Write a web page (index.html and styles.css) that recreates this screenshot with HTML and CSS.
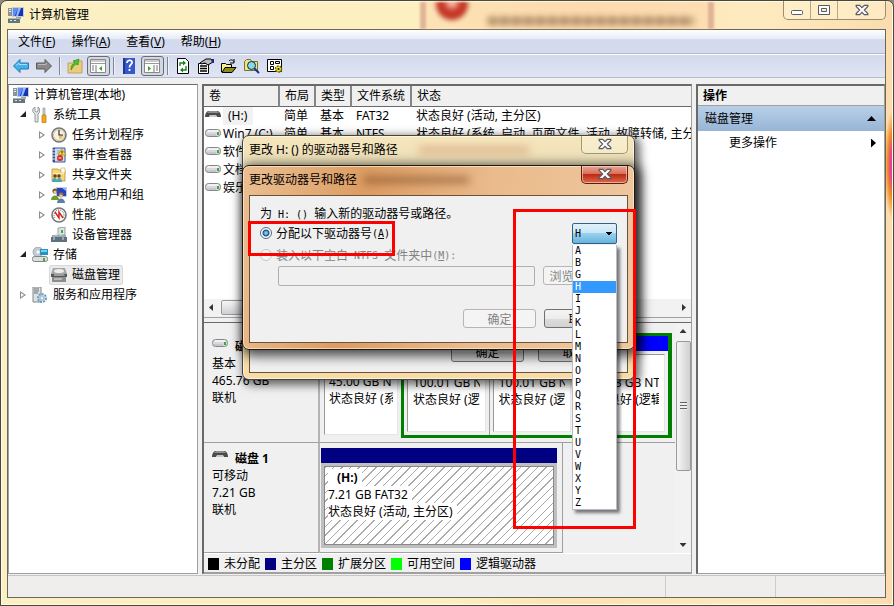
FILE: index.html
```
<!DOCTYPE html>
<html lang="zh-CN">

<head>
  <meta charset="UTF-8">
  <meta name="viewport" content="width=device-width, initial-scale=1.0">
  <title>计算机管理</title>
  <link rel="stylesheet" href="styles.css">
</head>

<body>
  <svg class="sprite" width="0" height="0">
    <symbol id="computer" viewBox="0 0 16 16">
      <path d="M0 1h5v8H0z" fill="#8a959b" />
      <path d="M1 2h2v1H1zM1 4h2v1H1z" fill="#e8eef0" />
      <path d="M4 0h12v10H4z" fill="#c4ccd8" />
      <path d="M5 1h10v8H5z" fill="#1633b4" />
      <path d="M5 1h5L7 9H5z" fill="#5f8df0" />
      <path d="M10 1h3l-3 8H8z" fill="#8fb6ff" />
      <path d="M8 10h5v2H8z" fill="#9ba3a8" />
      <path d="M0 11h12v5H0z" fill="#63777c" />
      <path d="M0 11h12v1H0z" fill="#a9b8bb" />
      <path d="M2 13h2v1H2zM6 13h2v1H6z" fill="#dfe8e8" />
    </symbol>
    <symbol id="tools" viewBox="0 0 16 16">
      <path d="M3 0v4l1 1h1l1-1V0c2 1 2 4 1 6L6 7v8H3V7L1 5C0 3 1 1 3 0z" fill="#e4e7e8" stroke="#7b8488" stroke-width=".8" />
      <path d="M11 1h2v7h-2z" fill="#cfd4d6" stroke="#777" stroke-width=".5" />
      <rect x="10" y="8" width="4" height="8" rx="1" fill="#f0ac1c" stroke="#b67200" stroke-width=".7" />
    </symbol>
    <symbol id="clock" viewBox="0 0 16 16">
      <circle cx="8" cy="8" r="7" fill="#f7f2e2" stroke="#777" stroke-width="1.6" />
      <circle cx="8" cy="8" r="5.5" fill="none" stroke="#cfc6a8" />
      <path d="M8 8h4a4 4 0 0 1-4 4z" fill="#efbd62" />
      <path d="M8 3v5h4" fill="none" stroke="#333" stroke-width="1.2" />
    </symbol>
    <symbol id="events" viewBox="0 0 16 16">
      <path d="M2 1h12v14H2z" fill="#cddcf0" stroke="#3b5797" />
      <path d="M2 1h2v14H2z" fill="#35518f" />
      <path d="M1 3h3M1 6h3M1 9h3M1 12h3" stroke="#dfe6f5" />
      <path d="M6 4h6M6 6h6M6 13h6" stroke="#8fa3c8" />
      <path d="M11 2l4 6H7z" fill="#ffd52e" stroke="#a77d00" stroke-width=".6" />
      <path d="M11 4v2M11 6.600v.8" stroke="#222" />
      <circle cx="9" cy="11" r="3" fill="#d62c22" />
      <path d="M7.500 11h3" stroke="#fff" />
    </symbol>
    <symbol id="shared" viewBox="0 0 16 16">
      <path d="M1 2h6l1 1h6v11H1z" fill="#f5d578" stroke="#bb9037" stroke-width=".8" />
      <path d="M10 1h4v5h-4z" fill="#fff" stroke="#bb9037" stroke-width=".5" />
      <path d="M2 6h11v1H2z" fill="#fdedb4" />
      <circle cx="4" cy="9" r="1.800" fill="#6b4626" />
      <circle cx="8" cy="9" r="1.800" fill="#6b4626" />
      <path d="M1 15c0-5 5-5 5-1 0-4 5-4 5 1z" fill="#45a9b5" />
    </symbol>
    <symbol id="users" viewBox="0 0 16 16">
      <path d="M5 0h11v10H5z" fill="#c6ced9" />
      <path d="M6 1h9v8H6z" fill="#2444c0" />
      <path d="M11 1h4v3z" fill="#8fb3ff" />
      <circle cx="4" cy="4" r="2.6" fill="#7a5632" />
      <circle cx="4" cy="5" r="1.6" fill="#f0c59a" />
      <path d="M0 13c0-6 8-6 8 0z" fill="#6f9c2c" />
      <circle cx="10" cy="8" r="2.4" fill="#a8743a" />
      <circle cx="10" cy="9" r="1.6" fill="#f0c59a" />
      <path d="M6 16c0-6 8-6 8 0z" fill="#5d7fa8" />
    </symbol>
    <symbol id="perf" viewBox="0 0 16 16">
      <circle cx="8" cy="8" r="7" fill="#fff" stroke="#777" stroke-width="1.6" />
      <path d="M4 11a5 5 0 1 1 8 0" fill="none" stroke="#555" stroke-dasharray="1 1" />
      <path d="M4 5l4 6V5l4 6" fill="none" stroke="#d0201c" stroke-width="1.4" />
    </symbol>
    <symbol id="devices" viewBox="0 0 16 16">
      <path d="M7 1l7-1v8H7z" fill="#dfe4e4" stroke="#858d90" stroke-width=".8" />
      <path d="M10 3h2v3h-2z" fill="#35b045" />
      <path d="M1 8h14v3H1z" fill="#9aabb5" />
      <path d="M0 10h16v5H0z" fill="#5f717c" />
      <path d="M5 9v-2h5v2M3 10v3M12 10v3" fill="none" stroke="#d5dde1" />
    </symbol>
    <symbol id="storage" viewBox="0 0 16 16">
      <circle cx="6" cy="5" r="5" fill="#c2cbd1" stroke="#828b90" stroke-width=".6" />
      <circle cx="6" cy="5" r="1.6" fill="#fff" />
      <path d="M8 2h8v6H8z" fill="#2394c4" />
      <path d="M9 3h6v2H9z" fill="#79d0ee" />
      <rect x=".5" y="9.500" width="15" height="5" rx="2" fill="#dcdfe0" stroke="#7f8689" />
      <path d="M11 11h2v3h-2z" fill="#35b52b" />
    </symbol>
    <symbol id="diskmgmt" viewBox="0 0 16 16">
      <path d="M2 1h12l2 6H0z" fill="#a5a5a5" />
      <ellipse cx="8" cy="4" rx="5" ry="2" fill="#ececec" />
      <path d="M0 7h16v3H0z" fill="#575757" />
      <path d="M1 10h14v5H1z" fill="#8c8c8c" />
      <path d="M3 8h10M3 12h8" stroke="#e4e4e4" />
      <path d="M12 8h2v1h-2z" fill="#3bd03b" />
    </symbol>
    <symbol id="services" viewBox="0 0 16 16">
      <path d="M1 0h8v15H1z" fill="#dce1e2" stroke="#7f898c" />
      <path d="M2 2h5M2 4h5M2 6h4" stroke="#647379" />
      <circle cx="10" cy="11" r="4" fill="none" stroke="#7098b8" stroke-width="2" stroke-dasharray="2 1" />
      <circle cx="10" cy="11" r="3" fill="#abc8de" />
      <circle cx="10" cy="11" r="1" fill="#fff" />
    </symbol>
    <symbol id="drive" viewBox="0 0 16 10">
      <rect x=".5" y="1.500" width="15" height="7" rx="3" fill="#d9d9dd" stroke="#85858a" />
      <path d="M3 2h10l1 2H2z" fill="#f1f1f3" />
      <path d="M2 7h9" stroke="#b4b4ba" />
      <path d="M12 4h2v3h-2z" fill="#3dab2c" />
    </symbol>
    <symbol id="removable" viewBox="0 0 16 10">
      <path d="M3 1h10c2 1 3 3 3 6h-4l-1-2H5L4 7H0c0-3 1-5 3-6z" fill="#4b4b4d" />
      <path d="M4 1h8l2 2H2z" fill="#8e8e91" />
      <path d="M5 5h6v2H5z" fill="#c8c8c8" />
    </symbol>
    <symbol id="cross" viewBox="0 0 12 10">
      <path d="M1 1h3l2 2 2-2h3v1L8 5l3 3v1H8L6 7 4 9H1V8l3-3-3-3z" fill="#fff" stroke="#555a66" />
    </symbol>
  </svg>

  <div class="window">
    <header class="titlebar">
      <div class="ghost">
        <i class="ghost-error"></i>
        <i class="ghost-text"></i>
      </div>
      <svg class="icon"><use href="#computer" /></svg>
      <h1>计算机管理</h1>
      <div class="controls">
        <button aria-label="最小化"><svg width="14" height="12"><rect x="1.5" y="6.5" width="11" height="4" rx="1" fill="#fff" stroke="#555a66" /></svg></button>
        <button aria-label="最大化"><svg width="14" height="12"><path d="M1.500 1.500h11v9h-11zM4.500 4.500v3h5v-3z" fill="#fff" fill-rule="evenodd" stroke="#555a66" /></svg></button>
        <button class="wide" aria-label="关闭"><svg width="14" height="12"><use href="#cross" /></svg></button>
      </div>
    </header>

    <div class="client">
      <nav class="menubar">
        <a href="#">文件(<u>F</u>)</a>
        <a href="#">操作(<u>A</u>)</a>
        <a href="#">查看(<u>V</u>)</a>
        <a href="#">帮助(<u>H</u>)</a>
      </nav>

      <div class="toolbar">
        <button aria-label="后退"><svg viewBox="0 0 16 16"><path d="M.5 8L7 1.500V5h8.500v6H7v3.500z" fill="#42b2ec" stroke="#2877ad" /><path d="M3 7.500L6 5v1.500h8" fill="none" stroke="#9ee0ff" /></svg></button>
        <button aria-label="前进"><svg viewBox="0 0 16 16"><path d="M15.500 8L9 1.500V5H.5v6H9v3.500z" fill="#898989" stroke="#5d5d5d" /><path d="M2 6.500h8V5" fill="none" stroke="#bbb" /></svg></button>
        <i class="sep"></i>
        <button aria-label="上一级"><svg viewBox="0 0 16 16"><path d="M1 5h5l1-2h8v12H1z" fill="#eccb7a" stroke="#b99848" stroke-width=".8" /><path d="M4 12c0-4 1-6 4-7L6 3l6-2-1 6-2-1c-2 1-3 3-5 6z" fill="#4cc431" stroke="#27851a" stroke-width=".6" /></svg></button>
        <button class="pressed" aria-label="显示控制台树"><svg viewBox="0 0 16 14"><path d="M.5.5h15v13H.5z" fill="#fff" stroke="#888" /><path d="M1 2h14M1 4.500h14" stroke="#999" /><path d="M2 7h2M2 9h2M2 11h2M6 6v7" stroke="#777" /><path d="M12 7v5L9 9.500z" fill="#2fa322" /></svg></button>
        <i class="sep"></i>
        <button aria-label="帮助"><svg viewBox="0 0 16 16"><path d="M2 0h12v16H2z" fill="#3559c8" /><path d="M2 0h2v16H2z" fill="#21398d" /><path d="M6 5c0-4 6-3 5 0-.5 1.500-2.500 2-2.500 4.500M8.500 11v2" fill="none" stroke="#fff" stroke-width="1.800" /></svg></button>
        <button class="pressed" aria-label="显示操作窗格"><svg viewBox="0 0 16 14"><path d="M.5.5h15v13H.5z" fill="#fff" stroke="#888" /><path d="M1 2h14M1 4.500h14" stroke="#999" /><path d="M12 7h2M12 9h2M12 11h2M10 6v7" stroke="#777" /><path d="M4 7v5l3-2.500z" fill="#2fa322" /></svg></button>
        <i class="sep"></i>
        <button aria-label="刷新"><svg viewBox="0 0 16 16"><path d="M2.500.5h8l3 3v12h-11z" fill="#fff" stroke="#000" /><path d="M5 8V5h5M11 8v4H6" fill="none" stroke="#16821b" stroke-width="1.400" /><path d="M8 2.500v5L11 5zM8 9.500v5L5 12z" fill="#16821b" /></svg></button>
        <button aria-label="属性"><svg viewBox="0 0 16 16"><path d="M.5 5.500h10v10H.5z" fill="#fff" stroke="#000" /><path d="M2 8h7M2 10.500h7M2 13h7" stroke="#000" stroke-width="1.400" /><path d="M2 5l6-4h5l2 3-5 3-3-2-4 1z" fill="#bbb" stroke="#000" /><path d="M13 1h3v4h-2z" fill="#24247c" /></svg></button>
        <button aria-label="打开"><svg viewBox="0 0 16 16"><path d="M.5 14V5.500h4l1 1h5V9" fill="#f8f28a" stroke="#000" /><path d="M1 14.500L4 9.500h11l-4 5z" fill="#8d8b1c" stroke="#000" /><path d="M8 3c2-2 4-1 5 1M13 1v4h-4" fill="none" stroke="#000" /></svg></button>
        <button aria-label="查找"><svg viewBox="0 0 16 16"><path d="M.5 3.500l2-2h4l1 2h6v9H.5z" fill="#ebe58a" stroke="#77752e" /><circle cx="7.500" cy="7.500" r="4" fill="#7fdcec" stroke="#222" /><path d="M10.500 10.500L15 15" stroke="#1a2f9c" stroke-width="2" /></svg></button>
        <button aria-label="设置"><svg viewBox="0 0 16 16"><path d="M.5 1.500h14v12H.5z" fill="#fff" stroke="#000" /><path d="M3.500 3.500h3v3h-3zM3.500 8.500h3v3h-3zM8.500 3.500h4v2h-4z" fill="none" stroke="#000" /><circle cx="11.500" cy="11" r="3" fill="#f4ea2a" stroke="#6e6900" stroke-width="1.500" stroke-dasharray="2 1" /><circle cx="11.500" cy="11" r="1" fill="#000" /></svg></button>
      </div>

      <main class="panes">
        <section class="pane tree">
          <div class="row"><span class="item"><svg class="icon"><use href="#computer" /></svg>计算机管理(本地)</span></div>
          <ul>
            <li>
              <div class="row"><i class="arrow open"></i><span class="item"><svg class="icon"><use href="#tools" /></svg>系统工具</span></div>
              <ul>
                <li class="row"><i class="arrow"></i><span class="item"><svg class="icon"><use href="#clock" /></svg>任务计划程序</span></li>
                <li class="row"><i class="arrow"></i><span class="item"><svg class="icon"><use href="#events" /></svg>事件查看器</span></li>
                <li class="row"><i class="arrow"></i><span class="item"><svg class="icon"><use href="#shared" /></svg>共享文件夹</span></li>
                <li class="row"><i class="arrow"></i><span class="item"><svg class="icon"><use href="#users" /></svg>本地用户和组</span></li>
                <li class="row"><i class="arrow"></i><span class="item"><svg class="icon"><use href="#perf" /></svg>性能</span></li>
                <li class="row"><i class="arrow none"></i><span class="item"><svg class="icon"><use href="#devices" /></svg>设备管理器</span></li>
              </ul>
            </li>
            <li>
              <div class="row"><i class="arrow open"></i><span class="item"><svg class="icon"><use href="#storage" /></svg>存储</span></div>
              <ul>
                <li class="row"><i class="arrow none"></i><span class="item selected"><svg class="icon"><use href="#diskmgmt" /></svg>磁盘管理</span></li>
              </ul>
            </li>
            <li>
              <div class="row"><i class="arrow"></i><span class="item"><svg class="icon"><use href="#services" /></svg>服务和应用程序</span></div>
            </li>
          </ul>
        </section>

        <section class="pane center">
          <div class="volumes">
            <table>
              <colgroup>
                <col class="col-name"><col class="col-small"><col class="col-small"><col class="col-fs"><col>
              </colgroup>
              <thead>
                <tr><th>卷</th><th>布局</th><th>类型</th><th>文件系统</th><th>状态</th></tr>
              </thead>
              <tbody>
                <tr><td class="name"><svg><use href="#removable" /></svg><span class="current">(H:)</span></td><td>简单</td><td>基本</td><td>FAT32</td><td>状态良好 (活动, 主分区)</td></tr>
                <tr><td class="name"><svg><use href="#drive" /></svg>Win7 (C:)</td><td>简单</td><td>基本</td><td>NTFS</td><td>状态良好 (系统, 启动, 页面文件, 活动, 故障转储, 主分区)</td></tr>
                <tr><td class="name"><svg><use href="#drive" /></svg>软件 (D:)</td><td>简单</td><td>基本</td><td>NTFS</td><td>状态良好 (逻辑驱动器)</td></tr>
                <tr><td class="name"><svg><use href="#drive" /></svg>文档 (E:)</td><td>简单</td><td>基本</td><td>NTFS</td><td>状态良好 (逻辑驱动器)</td></tr>
                <tr><td class="name"><svg><use href="#drive" /></svg>娱乐 (F:)</td><td>简单</td><td>基本</td><td>NTFS</td><td>状态良好 (逻辑驱动器)</td></tr>
              </tbody>
            </table>
          </div>
          <div class="hscroll"><i class="left"></i><b></b><i class="right"></i></div>

          <div class="diskview">
            <div class="disks">
              <div class="disk">
                <div class="disk-info">
                  <h2><svg><use href="#drive" /></svg>磁盘 0</h2>
                  <p>基本</p>
                  <p>465.76 GB</p>
                  <p>联机</p>
                </div>
                <div class="graph">
                  <div class="part primary">
                    <div class="body"><b>Win7 (C:)</b><span>45.00 GB NTFS</span><span>状态良好 (系统, 启动)</span></div>
                  </div>
                  <div class="extended">
                    <div class="part logical">
                      <div class="body"><b>软件 (D:)</b><span>100.01 GB NTFS</span><span>状态良好 (逻辑驱动器)</span></div>
                    </div>
                    <div class="part logical">
                      <div class="body"><b>文档 (E:)</b><span>100.01 GB NTFS</span><span>状态良好 (逻辑驱动器)</span></div>
                    </div>
                    <div class="part logical">
                      <div class="body"><b>娱乐 (F:)</b><span>220.73 GB NTFS</span><span>状态良好 (逻辑驱动器)</span></div>
                    </div>
                  </div>
                </div>
              </div>
              <div class="disk">
                <div class="disk-info">
                  <h2><svg><use href="#removable" /></svg>磁盘 1</h2>
                  <p>可移动</p>
                  <p>7.21 GB</p>
                  <p>联机</p>
                </div>
                <div class="graph single">
                  <div class="part primary active">
                    <div class="body"><b>(H:)</b><span>7.21 GB FAT32</span><span>状态良好 (活动, 主分区)</span></div>
                  </div>
                </div>
              </div>
            </div>
            <div class="vscroll"><i class="up"></i><b></b><i class="down"></i></div>
          </div>

          <div class="legend">
            <span class="unallocated">未分配</span>
            <span class="main-part">主分区</span>
            <span class="ext-part">扩展分区</span>
            <span class="free">可用空间</span>
            <span class="logical-drive">逻辑驱动器</span>
          </div>
        </section>

        <aside class="pane actions">
          <h2>操作</h2>
          <h3>磁盘管理<i class="up"></i></h3>
          <a href="#">更多操作<i class="right"></i></a>
        </aside>
      </main>

      <footer class="statusbar"><span></span><span></span><span></span></footer>
    </div>
  </div>

  <div class="dialog back">
    <div class="caption">
      <h2>更改 H: () 的驱动器号和路径</h2>
      <button class="close" aria-label="关闭"><svg width="14" height="12"><use href="#cross" /></svg></button>
    </div>
    <div class="content">
      <div class="buttons">
        <button>确定</button>
        <button>取消</button>
      </div>
    </div>
  </div>

  <div class="dialog front">
    <div class="caption">
      <h2>更改驱动器号和路径</h2>
      <button class="close" aria-label="关闭"><svg width="14" height="12"><use href="#cross" /></svg></button>
    </div>
    <form class="content">
      <p>为<span class="en"> H: () </span>输入新的驱动器号或路径。</p>
      <div class="assign">
        <label><input type="radio" name="path" checked>分配以下驱动器号<span class="en">(<u>A</u>)</span></label>
        <div class="combo">
          <select aria-label="驱动器号">
            <option>A</option>
            <option>B</option>
            <option>G</option>
            <option selected>H</option>
            <option>I</option>
            <option>J</option>
          </select>
          <ul class="letters">
            <li>A</li><li>B</li><li>G</li><li class="on">H</li><li>I</li><li>J</li><li>K</li><li>L</li>
            <li>M</li><li>N</li><li>O</li><li>P</li><li>Q</li><li>R</li><li>S</li><li>T</li>
            <li>U</li><li>V</li><li>W</li><li>X</li><li>Y</li><li>Z</li>
          </ul>
        </div>
      </div>
      <label class="off"><input type="radio" name="path" disabled>装入以下空白<span class="en"> NTFS </span>文件夹中<span class="en">(<u>M</u>):</span></label>
      <div class="mount">
        <input type="text" aria-label="文件夹" disabled>
        <button type="button" disabled>浏览<span class="en">(B)...</span></button>
      </div>
      <div class="buttons">
        <button type="button" disabled>确定</button>
        <button type="button">取消</button>
      </div>
    </form>
  </div>

  <i class="mark mark-radio"></i>
  <i class="mark mark-letters"></i>
</body>

</html>
```
FILE: styles.css
```
:root {
  --face: #f0f0f0;
  --line: #a0a0a0;
  --edge: #696969;
  --navy: #000080;
  --green: #008000;
  --blue: #0000ff;
}

* {
  box-sizing: border-box;
}

body {
  margin: 0;
  position: relative;
  font: 12px/18px "Noto Sans", "Noto Sans CJK SC", sans-serif;
  color: #000;
  background: #8d8a80;
}

h1, h2, h3, p, ul {
  margin: 0;
  padding: 0;
  font-size: 12px;
  font-weight: normal;
  list-style: none;
}

button {
  font: inherit;
  color: inherit;
}

a {
  color: inherit;
  text-decoration: none;
}

.sprite {
  position: absolute;
}

.icon {
  width: 16px;
  height: 16px;
  flex: none;
}

.window {
  min-height: 100vh;
  display: flex;
  flex-direction: column;
  padding: 0 7px 7px 6px;
  border: 1px solid #4a463a;
  border-radius: 7px 7px 0 0;
  background:
    radial-gradient(ellipse 9px 55px at 100% 164px, #ea3f97 30%, #f08c22 60%, transparent),
    linear-gradient(90deg, #fbf0c4, #fdf0c0 50%, #fce2b4 65%, #fdebbf 85%, #fbdcae);
  box-shadow: inset 0 0 0 1px #fffbe6;
}

.titlebar {
  position: relative;
  display: flex;
  align-items: center;
  gap: 5px;
  height: 28px;
  padding-left: 1px;
}

.titlebar .icon {
  position: relative;
}

.titlebar h1 {
  flex: 1;
}

.ghost {
  position: absolute;
  top: 1px;
  bottom: 0;
  left: 47%;
  width: 294px;
  overflow: hidden;
  background: rgba(252, 212, 168, .5);
  border: solid rgba(206, 152, 132, .6);
  border-width: 0 6px;
  filter: blur(1px);
}

.ghost-error {
  position: absolute;
  left: 10px;
  top: -14px;
  width: 32px;
  height: 32px;
  border-radius: 50%;
  background: radial-gradient(circle at 50% 45%, #f4b4a4 0 4px, #cf3a2a 8px, #a83020);
  filter: blur(2px);
}

.ghost-text {
  position: absolute;
  left: 62px;
  top: 15px;
  width: 206px;
  height: 8px;
  background: repeating-linear-gradient(90deg, rgba(110, 70, 40, .6) 0 8px, rgba(110, 70, 40, .2) 10px 12px);
  filter: blur(3px);
}

.controls {
  position: relative;
  align-self: flex-start;
  display: flex;
  height: 19px;
  border: 1px solid #9a8c72;
  border-top: 0;
  border-radius: 0 0 5px 5px;
  background: rgba(255, 246, 214, .5);
}

.controls button {
  width: 27px;
  padding: 0;
  border: 0;
  border-right: 1px solid #b5a78c;
  background: none;
  line-height: 10px;
}

.controls .wide {
  width: 47px;
  border-right: 0;
}

.client {
  flex: 1;
  display: flex;
  flex-direction: column;
  border: 1px solid #6b6656;
  background: var(--face);
}

.menubar {
  display: flex;
  gap: 16px;
  height: 24px;
  padding: 3px 10px;
  border-bottom: 1px solid #b2b8cc;
  background: linear-gradient(#fff, #e6ebf6 38%, #d3daed 42%, #d5dbee);
}

.toolbar {
  display: flex;
  align-items: center;
  height: 24px;
  padding-left: 2px;
  border-top: 1px solid #fff;
  border-bottom: 1px solid #b6bccc;
  background: linear-gradient(#d3daed, #dfe5f3);
}

.toolbar button {
  width: 23px;
  height: 22px;
  padding: 3px;
  border: 0;
  background: none;
}

.toolbar svg {
  display: block;
  width: 16px;
  height: 16px;
}

.toolbar .pressed {
  height: 20px;
  border: 1px solid #686c76;
  border-radius: 3px;
  padding: 1px 2px;
  background: #d2d7e2;
}

.toolbar .sep {
  width: 2px;
  height: 18px;
  margin: 0 3px;
  background: linear-gradient(90deg, #7f8694 50%, #eef1f8 50%);
}

.panes {
  flex: 1;
  display: flex;
  gap: 4px;
  padding-top: 6px;
}

.pane {
  border: 1px solid var(--line);
  border-top: 2px solid var(--edge);
  background: #fff;
}

.tree {
  width: 190px;
  border-top-width: 1px;
}

.tree .row {
  display: flex;
  align-items: center;
  height: 20px;
}

.tree > .row {
  padding-left: 2px;
}

.tree > ul {
  padding-left: 7px;
}

.tree ul ul {
  padding-left: 19px;
}

.item {
  display: flex;
  align-items: center;
  gap: 5px;
  height: 20px;
  padding: 0 3px 0 2px;
}

.item.selected {
  border-radius: 3px;
  background: #ebebeb;
  box-shadow: inset 0 0 0 1px #d9d9d9;
}

.arrow {
  width: 14px;
  height: 8px;
}

.arrow::before {
  content: "";
  display: block;
  width: 6px;
  height: 8px;
  margin-left: 4px;
  background: #8d8d8d;
  clip-path: polygon(0 0, 100% 50%, 0 100%, 0 0, 1px 2px, 1px 6px, 4px 4px, 1px 2px);
}

.arrow.open::before {
  height: 6px;
  background: #222;
  clip-path: polygon(100% 0, 100% 100%, 0 100%);
}

.arrow.none::before {
  background: none;
}

.center {
  flex: 1;
  min-width: 0;
  display: flex;
  flex-direction: column;
  border-left: 2px solid var(--edge);
  background: var(--face);
}

.volumes {
  flex: 1;
  overflow: hidden;
  background: #fff;
}

.volumes table {
  width: 100%;
  table-layout: fixed;
  border-collapse: collapse;
  white-space: nowrap;
}

.col-name {
  width: 75px;
}

.col-small {
  width: 36px;
}

.col-fs {
  width: 60px;
}

.volumes th {
  height: 20px;
  padding: 0 0 0 5px;
  text-align: left;
  font-weight: normal;
  background: var(--face);
  border-right: 2px solid #858585;
  border-bottom: 1px solid var(--edge);
}

.volumes th:last-child {
  border-right: 0;
}

.volumes td {
  height: 18px;
  padding: 0 0 0 5px;
  overflow: hidden;
}

.volumes .name {
  padding-left: 1px;
}

.name svg {
  width: 16px;
  height: 10px;
  margin-right: 2px;
}

.name .current {
  display: inline-block;
  padding: 0 6px 0 5px;
  background: #f2f2f2;
}

.hscroll,
.vscroll {
  display: flex;
  align-items: center;
  background: #f2f2f2;
}

.hscroll {
  height: 17px;
  padding: 0 5px;
  gap: 8px;
}

.hscroll b {
  width: 270px;
  height: 15px;
  border: 1px solid #999;
  border-radius: 2px;
  background: linear-gradient(#f6f6f6, #d0d0d4);
}

.hscroll .right {
  margin-left: auto;
}

i.left, i.right, i.up, i.down {
  background: #333;
}

i.left, i.right {
  width: 4px;
  height: 7px;
}

i.up, i.down {
  width: 7px;
  height: 4px;
}

i.left {
  clip-path: polygon(100% 0, 100% 100%, 0 50%);
}

i.right {
  clip-path: polygon(0 0, 100% 50%, 0 100%);
}

i.up {
  clip-path: polygon(50% 0, 100% 100%, 0 100%);
}

i.down {
  clip-path: polygon(0 0, 100% 0, 50% 100%);
}

.diskview {
  display: flex;
  height: 236px;
  margin-top: 1px;
  padding-top: 5px;
  border-top: 1px solid var(--line);
  background: linear-gradient(var(--edge), var(--edge)) 0 4px / 100% 1px no-repeat;
}

.disks {
  flex: 1;
  min-width: 0;
  padding-top: 5px;
  line-height: 17px;
}

.disk {
  display: flex;
  height: 115px;
}

.disk + .disk {
  height: 110px;
}

.disk-info {
  width: 116px;
  padding: 10px 8px 0;
  border-right: 2px solid #b4b4b4;
  border-bottom: 1px solid var(--line);
}

.disk + .disk .disk-info {
  padding-top: 7px;
}

.disk-info h2 {
  display: flex;
  gap: 7px;
  font-weight: bold;
}

.disk-info h2 svg {
  width: 16px;
  height: 10px;
}

.graph {
  flex: 1;
  min-width: 0;
  display: flex;
  align-items: stretch;
  padding: 5px 3px 4px 1px;
  border-bottom: 1px solid var(--line);
}

.graph.single {
  flex: none;
  width: 243px;
  padding: 5px 5px 4px 1px;
  border-right: 1px solid var(--line);
}

.part {
  flex: 1;
  min-width: 0;
  display: flex;
  flex-direction: column;
  background: var(--face);
}

.part::before {
  content: "";
  height: 15px;
  background: var(--navy);
}

.part.logical::before {
  background: var(--blue);
}

.part .body {
  flex: 1;
  margin: 3px;
  padding: 4px 4px 0;
  border: 1px solid #999;
  border-color: #999 #e6e6e6 #e6e6e6 #999;
  background: #fff;
  overflow: hidden;
  white-space: nowrap;
}

.part.logical .body {
  padding: 2px 5px 0;
}

.body b,
.body span {
  display: block;
  width: fit-content;
  max-width: 100%;
  overflow: hidden;
  background: #fff;
}

.graph > .primary {
  flex: 0 0 80px;
}

.graph.single > .primary {
  flex: 1;
}

.part.active {
  background: #bfbfbf;
}

.active .body {
  padding: 2px 3px;
  border-color: #888;
  background: repeating-linear-gradient(135deg, #aaa 0 1px, #fff 1px 6px);
}

.active .body b,
.active .body span {
  padding-right: 4px;
}

.active .body b {
  padding-left: 9px;
}

.extended {
  flex: 1;
  min-width: 0;
  display: flex;
  border: 3px solid var(--green);
  border-right-width: 4px;
}

.extended .part:last-child {
  flex-grow: 1.1;
}

.extended .part + .part {
  border-left: 1px solid var(--line);
}

.vscroll {
  width: 16px;
  padding: 6px 0;
  flex-direction: column;
}

.vscroll b {
  display: grid;
  place-items: center;
  width: 15px;
  height: 130px;
  margin-top: 8px;
  border: 1px solid #999;
  border-radius: 2px;
  background: linear-gradient(90deg, #f6f6f6, #d0d0d4);
}

.vscroll b::before {
  content: "";
  width: 7px;
  height: 8px;
  background: repeating-linear-gradient(#666 0 1px, #eee 1px 3px);
}

.vscroll .down {
  margin-top: auto;
}

.legend {
  display: flex;
  gap: 5px;
  height: 20px;
  padding: 1px 0 0 4px;
  border-top: 1px solid #fff;
  border-bottom: 1px solid var(--line);
}

.legend span {
  display: flex;
  align-items: center;
  gap: 5px;
  white-space: nowrap;
}

.legend span::before {
  content: "";
  width: 11px;
  height: 12px;
  background: #000;
}

.legend .main-part::before {
  background: var(--navy);
}

.legend .ext-part::before {
  background: var(--green);
}

.legend .free::before {
  background: #00ff00;
}

.legend .logical-drive::before {
  background: var(--blue);
}

.actions {
  width: 189px;
  border-left: 2px solid var(--edge);
}

.actions h2 {
  height: 20px;
  padding: 1px 0 0 5px;
  font-weight: bold;
  background: var(--face);
  border-bottom: 1px solid var(--line);
}

.actions h3,
.actions a {
  display: flex;
  align-items: center;
  justify-content: space-between;
  height: 24px;
  padding: 0 8px 0 31px;
}

.actions h3 {
  height: 25px;
  padding-left: 7px;
  background: linear-gradient(#b8cfe8, #98b5d6);
}

.actions i {
  background: #000;
}

.actions i.up {
  width: 9px;
  height: 5px;
}

.actions i.right {
  width: 5px;
  height: 9px;
}

.statusbar {
  display: flex;
  height: 22px;
  margin-top: 1px;
  border-top: 1px solid #c8c4c4;
  background: #f0eded;
}

.statusbar span {
  flex: 1;
}

.statusbar span + span {
  flex: 0 0 110px;
  border-left: 1px solid #ccc;
}

/* dialogs float over the main window */
.dialog {
  position: absolute;
  left: 242px;
  top: 135px;
  width: 393px;
  padding: 0 6px 6px;
  border: 1px solid #4a4338;
  border-radius: 7px;
  background: linear-gradient(#f6e6bc, #ecdfb8 28px, #f7dca8 60px, #f7dca8);
  box-shadow: inset 0 0 0 1px rgba(255, 255, 255, .6), 3px 3px 10px 2px rgba(0, 0, 0, .6);
}

.dialog.front {
  top: 165px;
  border-color: #1f1a14;
  background: linear-gradient(100deg, #eabf92, #dc9c62 30%, #eabb8c 60%, #efc8a0);
  box-shadow: inset 0 0 0 1px rgba(255, 235, 210, .7), 3px 3px 12px 3px rgba(0, 0, 0, .7);
}

.caption {
  position: relative;
  display: flex;
  justify-content: space-between;
  height: 29px;
}

.caption h2 {
  padding-top: 5px;
}

.caption::after {
  content: "";
  position: absolute;
  left: 170px;
  top: 11px;
  width: 110px;
  height: 6px;
  background: rgba(200, 120, 80, .5);
  filter: blur(4px);
}

.front .caption::after {
  left: 115px;
  width: 105px;
  background: rgba(90, 40, 10, .5);
}

.close {
  width: 47px;
  height: 18px;
  padding: 0;
  line-height: 10px;
  border: 1px solid #a39878;
  border-top: 0;
  border-radius: 0 0 5px 5px;
  background: rgba(255, 250, 225, .4);
}

.front .close {
  border-color: #5e1d12;
  background: linear-gradient(#e9a596, #d9705c 45%, #bb2b14 50%, #e0684a);
  box-shadow: inset 0 0 0 1px rgba(255, 220, 200, .6);
}

.dialog .content {
  height: 208px;
  border: 1px solid #6e5238;
  background: var(--face);
}

.front .content {
  height: 148px;
  padding: 8px 10px;
  font-family: "Noto Sans CJK SC", sans-serif;
}

.en {
  font: 10px "DejaVu Sans Mono", monospace;
  white-space: pre;
}

.front label {
  display: flex;
  align-items: center;
  height: 22px;
}

.front label input {
  width: 12px;
  height: 12px;
  margin: 0 4px 0 0;
  appearance: none;
  border: 1px solid #8a8f94;
  border-radius: 50%;
  background: #f6f6f6;
}

.front label input:checked {
  border-color: #55697a;
  background: radial-gradient(circle, #6fd0f5 0 1px, #1b4f86 3px, #fff 4px);
}

.front label.off {
  color: #838383;
}

.front label.off input {
  border-color: #c4c4c4;
}

.assign {
  display: flex;
  justify-content: space-between;
}

.combo {
  position: relative;
  margin-top: 1px;
}

.combo select {
  display: block;
  width: 45px;
  height: 21px;
  padding: 0 2px;
  appearance: none;
  border: 1px solid #2c628b;
  border-radius: 2px;
  font: 10px "DejaVu Sans Mono", monospace;
  background:
    linear-gradient(to top right, transparent 50%, #000 50%) 32px 8px / 4px 4px no-repeat,
    linear-gradient(to top left, transparent 50%, #000 50%) 36px 8px / 4px 4px no-repeat,
    linear-gradient(#e2f2fb, #c4e5f6 50%, #98d1ef 50%, #68b3db);
}

.letters {
  position: absolute;
  z-index: 1;
  left: 0;
  top: 22px;
  width: 45px;
  border: 1px solid #b9b9cc;
  border-top: 0;
  background: #fff;
  line-height: 12px;
  box-shadow: 3px 3px 3px rgba(0, 0, 0, .5);
}

.letters li {
  padding-left: 2px;
  font: 10px/12px "DejaVu Sans Mono", monospace;
}

.letters .on {
  color: #fff;
  background: #3399ff;
}

.mount {
  display: flex;
  gap: 8px;
  padding-left: 18px;
}

.mount input {
  width: 257px;
  height: 20px;
  border: 1px solid #b0b0b0;
  border-radius: 2px;
  background: #f0f0f0;
}

.dialog .mount button,
.buttons button {
  width: 73px;
  height: 19px;
  padding: 0;
  line-height: 16px;
  border: 1px solid #707070;
  border-radius: 3px;
  background: linear-gradient(#f4f4f4, #ececec 50%, #dddddd 50%, #d2d2d2);
}

.dialog button:disabled {
  color: #838383;
  border-color: #b5b5b5;
  background: #f4f4f4;
}

.buttons {
  display: flex;
  justify-content: flex-end;
  gap: 8px;
}

.front .buttons {
  margin-top: 23px;
}

.back .buttons {
  gap: 14px;
  padding: 177px 16px 0 0;
}

.mark {
  position: absolute;
  border: 3px solid #f00;
}

.mark-radio {
  left: 248px;
  top: 221px;
  width: 147px;
  height: 35px;
}

.mark-letters {
  left: 513px;
  top: 209px;
  width: 123px;
  height: 320px;
}
```
